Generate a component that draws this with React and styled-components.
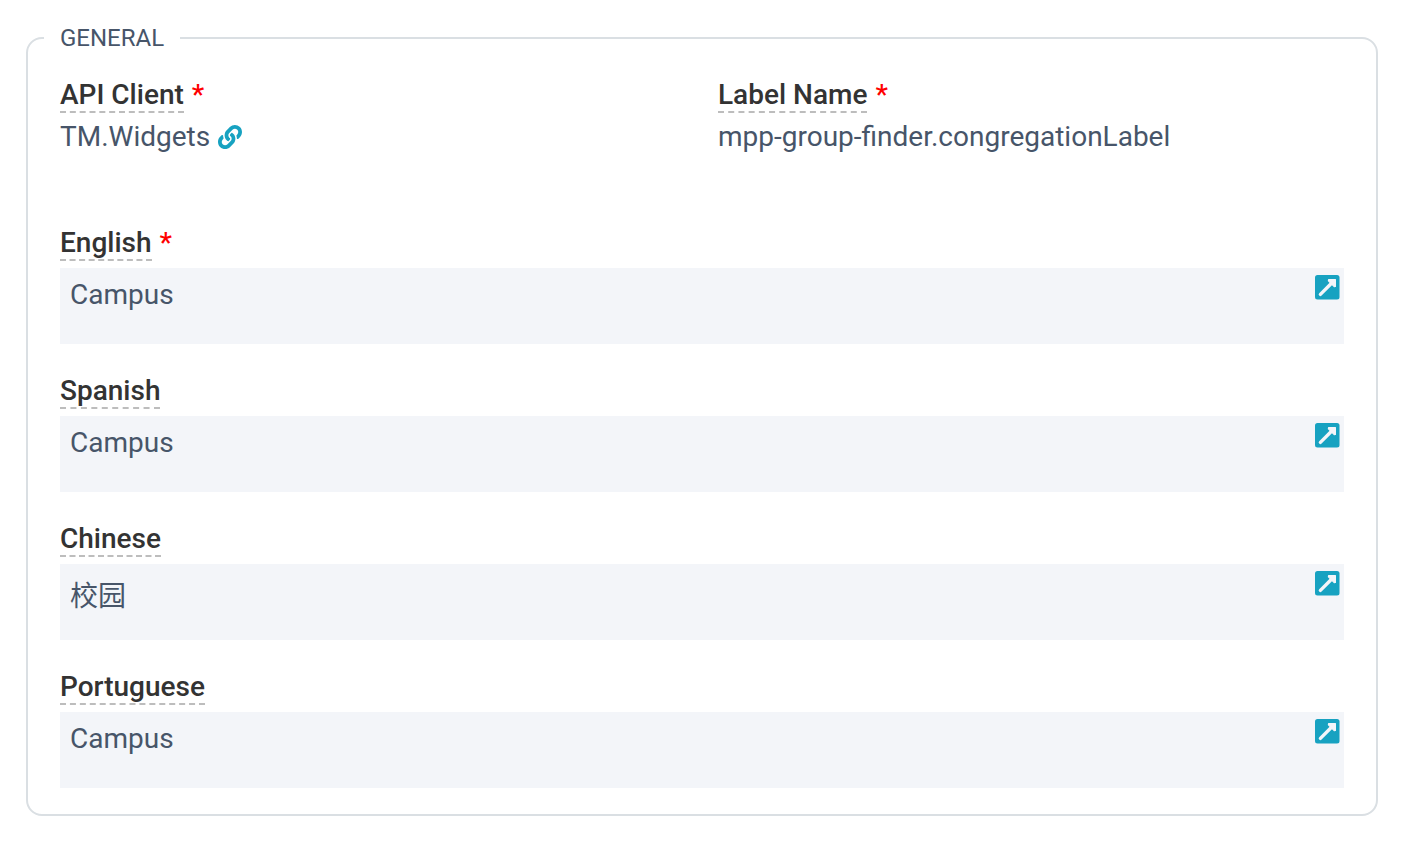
import React from "react";
import styled, { createGlobalStyle } from "styled-components";
import { FaLink } from "react-icons/fa";

const translations = [
  { id: "english", label: "English", value: "Campus", required: true },
  { id: "spanish", label: "Spanish", value: "Campus" },
  { id: "chinese", label: "Chinese", value: "校园" },
  { id: "portuguese", label: "Portuguese", value: "Campus" },
];

const ExpandIcon = () => (
  <svg viewBox="0 0 25 25" width="25" height="25" aria-hidden="true">
    <rect width="24.5" height="24.5" rx="2.5" fill="#17a2c1" />
    <path
      d="M5.4 19.4 L17 7.8"
      stroke="#f3f5f9"
      strokeWidth="3.4"
      strokeLinecap="round"
      fill="none"
    />
    <path
      d="M13.6 4.6 H20.4 V11.4 L19.2 11.6 L13.4 5.8 Z"
      stroke="#f3f5f9"
      strokeWidth="1.2"
      strokeLinejoin="round"
      fill="#f3f5f9"
    />
  </svg>
);

const App = () => {
  return (
    <>
      <GlobalStyle />
      <Page>
        <Section>
          <Legend>GENERAL</Legend>
          <Fields>
            <Field>
              <LabelRow>
                <Label as="span">API Client</Label>
                <Required>*</Required>
              </LabelRow>
              <Value>
                TM.Widgets
                <RecordLink href="#api-client" aria-label="Open API Client">
                  <FaLink />
                </RecordLink>
              </Value>
            </Field>
            <Field>
              <LabelRow>
                <Label as="span">Label Name</Label>
                <Required>*</Required>
              </LabelRow>
              <Value>mpp-group-finder.congregationLabel</Value>
            </Field>
            {translations.map((item) => (
              <Field key={item.id} $wide>
                <LabelRow>
                  <Label htmlFor={item.id}>{item.label}</Label>
                  {item.required && <Required>*</Required>}
                </LabelRow>
                <TextBox>
                  <TextArea id={item.id} defaultValue={item.value} readOnly />
                  <ExpandButton
                    type="button"
                    aria-label={`Expand ${item.label}`}
                  >
                    <ExpandIcon />
                  </ExpandButton>
                </TextBox>
              </Field>
            ))}
          </Fields>
        </Section>
      </Page>
    </>
  );
};

const GlobalStyle = createGlobalStyle`
  * {
    box-sizing: border-box;
  }

  body {
    margin: 0;
    background: #fff;
    color: #475569;
    font-family: Roboto, "Noto Sans CJK SC", sans-serif;
    font-size: 28px;
    line-height: 34px;
  }
`;

const Page = styled.main`
  padding: 24px 26px;
`;

const Section = styled.fieldset`
  min-width: 0;
  margin: 0;
  padding: 28px 32px 26px;
  border: 2px solid #dadfe3;
  border-radius: 16px;
`;

const Legend = styled.legend`
  margin-left: -16px;
  padding: 0 16px;
  font-size: 24px;
  line-height: 28px;
`;

const Fields = styled.div`
  display: grid;
  grid-template-columns: 1fr 1fr;
  gap: 32px;
`;

const Field = styled.div`
  min-width: 0;
  grid-column: ${({ $wide }) => ($wide ? "1 / -1" : "auto")};
`;

const LabelRow = styled.div`
  display: flex;
  align-items: flex-start;
  gap: 8px;
  height: 40px;
  font-weight: 500;
  line-height: 29px;
`;

const Label = styled.label`
  padding-bottom: 2px;
  border-bottom: 2px dashed #bdbdbd;
  color: #333;
`;

const Required = styled.span`
  color: #f00;
`;

const Value = styled.div`
  display: flex;
  align-items: flex-start;
  gap: 8px;
  min-height: 76px;
`;

const RecordLink = styled.a`
  display: flex;
  align-items: center;
  height: 34px;
  color: #17a2c1;
  font-size: 24px;
`;

const TextBox = styled.div`
  position: relative;
`;

const TextArea = styled.textarea`
  display: block;
  width: 100%;
  height: 76px;
  padding: 10px;
  border: 0;
  outline: 0;
  background: #f3f5f9;
  color: inherit;
  font: inherit;
  line-height: normal;
  resize: none;
`;

const ExpandButton = styled.button`
  position: absolute;
  top: 7px;
  right: 4px;
  padding: 0;
  border: 0;
  background: none;
  line-height: 0;
  cursor: pointer;
`;

export default App;
